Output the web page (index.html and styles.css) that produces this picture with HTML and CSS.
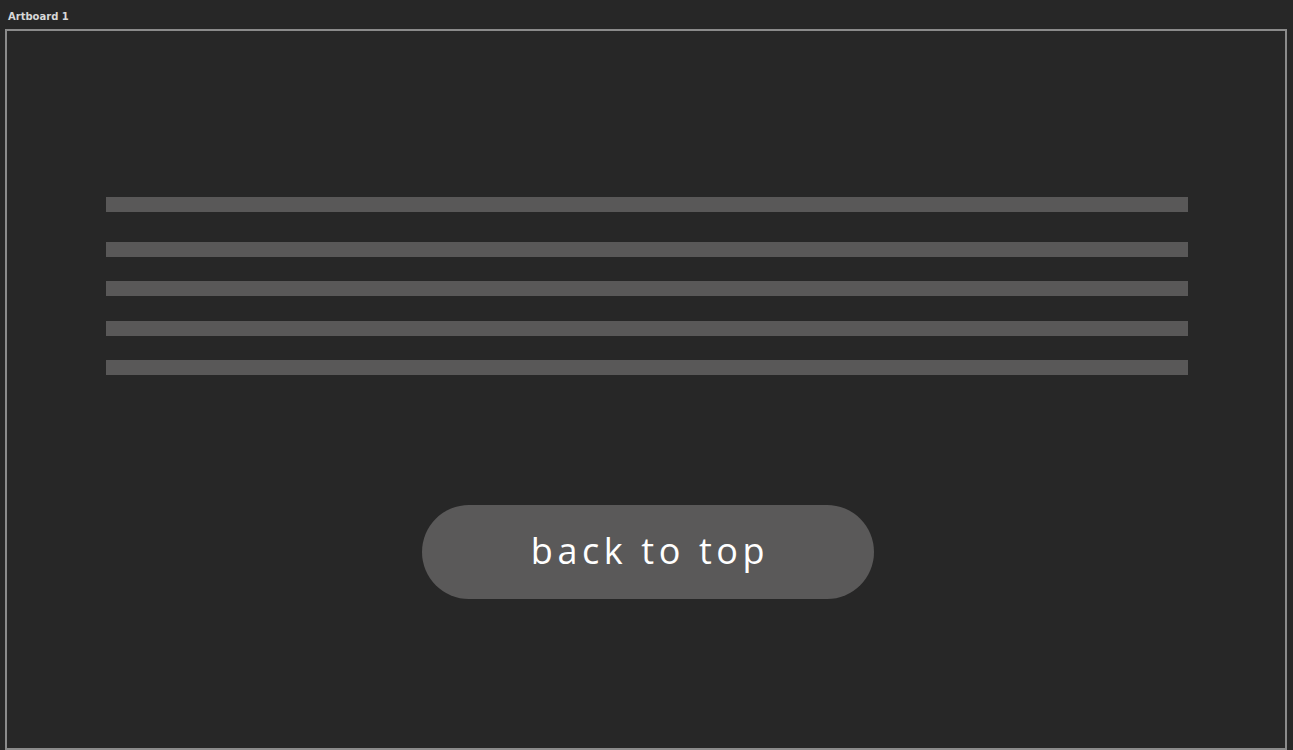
FILE: index.html
```html
<!DOCTYPE html>
<html>
<head>
<meta charset="utf-8">
<link rel="stylesheet" href="styles.css">
</head>
<body>
<div class="label">Artboard 1</div>
<div class="artboard">
  <div class="bars">
    <div class="bar"></div>
    <div class="bar b2"></div>
    <div class="bar b3"></div>
    <div class="bar b4"></div>
    <div class="bar b5"></div>
  </div>
  <button class="top-btn">back to top</button>
</div>
</body>
</html>
```
FILE: styles.css
```css
html, body {
  margin: 0;
  padding: 0;
  background: #272727;
  overflow: hidden;
}
body {
  width: 1293px;
  height: 750px;
}
.label {
  height: 29px;
  padding-left: 8px;
  box-sizing: border-box;
  padding-top: 11px;
  font-family: "DejaVu Sans", Verdana, sans-serif;
  font-weight: bold;
  font-size: 10px;
  line-height: 12px;
  color: #d8d8d8;
}
.artboard {
  margin-left: 5px;
  width: 1282px;
  height: 721px;
  box-sizing: border-box;
  border: 2px solid #8b8b8b;
  padding-top: 166px;
  padding-left: 99px;
  display: flex;
  flex-direction: column;
  align-items: flex-start;
}
.bars {
  display: flex;
  flex-direction: column;
  width: 1082px;
}
.bar {
  height: 15px;
  background: #595858;
}
.b2 { margin-top: 30px; }
.b3 { margin-top: 24px; }
.b4 { margin-top: 25px; }
.b5 { margin-top: 24px; }
.top-btn {
  margin-top: 130px;
  margin-left: 316px;
  width: 452px;
  height: 94px;
  border: none;
  border-radius: 47px;
  background: #5a5959;
  color: #ffffff;
  font-family: "Open Sans", "Noto Sans", sans-serif;
  font-size: 36px;
  letter-spacing: 4.6px;
  padding: 0 0 4px 4px;
  display: flex;
  align-items: center;
  justify-content: center;
}
```
